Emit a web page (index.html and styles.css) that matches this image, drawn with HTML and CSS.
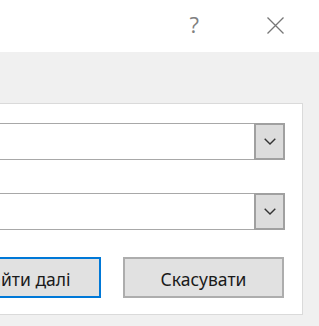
FILE: index.html
```html
<!DOCTYPE html>
<html>
<head>
<meta charset="utf-8">
<link rel="stylesheet" href="styles.css">
</head>
<body>
<div class="dialog">
  <div class="titlebar">
    <span class="help">?</span>
    <span class="close">
      <svg width="17" height="17" viewBox="0 0 17 17"><path d="M0.5 0.5 L16.5 16.5 M16.5 0.5 L0.5 16.5" stroke="#777" stroke-width="1.3" fill="none"/></svg>
    </span>
  </div>
  <div class="body">
    <div class="panel">
      <div class="combo">
        <div class="field"></div>
        <div class="drop"><svg width="12" height="7" viewBox="0 0 12 7"><path d="M0.7 0.7 L6 6 L11.3 0.7" stroke="#333" stroke-width="1.4" fill="none"/></svg></div>
      </div>
      <div class="combo">
        <div class="field"></div>
        <div class="drop"><svg width="12" height="7" viewBox="0 0 12 7"><path d="M0.7 0.7 L6 6 L11.3 0.7" stroke="#333" stroke-width="1.4" fill="none"/></svg></div>
      </div>
      <div class="buttons">
        <button class="btn primary">Знайти далі</button>
        <button class="btn">Скасувати</button>
      </div>
    </div>
  </div>
</div>
</body>
</html>
```
FILE: styles.css
```css
html, body {
  margin: 0;
  padding: 0;
  width: 319px;
  height: 326px;
  overflow: hidden;
  background: #f0f0f0;
  font-family: "Noto Sans", "Open Sans", sans-serif;
}
.dialog {
  width: 319px;
  height: 326px;
  display: flex;
  flex-direction: column;
}
.titlebar {
  height: 52px;
  background: #ffffff;
  display: flex;
  align-items: flex-start;
  justify-content: flex-end;
  flex-shrink: 0;
}
.help {
  margin-top: 11px;
  margin-right: 68px;
  font-family: "Open Sans", sans-serif;
  font-size: 22px;
  line-height: 26px;
  color: #808080;
}
.close {
  margin-top: 17px;
  margin-right: 35px;
  display: flex;
}
.body {
  flex: 1;
  padding: 51px 16px 0 0;
  display: flex;
  justify-content: flex-end;
}
.panel {
  margin-left: -60px;
  flex: 1;
  height: 212px;
  box-sizing: border-box;
  background: #ffffff;
  border: 1px solid #dadada;
  padding: 19px 17px 0 0;
  display: flex;
  flex-direction: column;
}
.combo {
  height: 37px;
  display: flex;
  box-sizing: border-box;
}
.combo + .combo {
  margin-top: 33px;
}
.field {
  flex: 1;
  border: 1px solid #a8a8a8;
  border-right: none;
  background: #fff;
}
.drop {
  width: 31px;
  box-sizing: border-box;
  border: 2px solid #a0a0a0;
  background: #dcdcdc;
  display: flex;
  align-items: center;
  justify-content: center;
}
.buttons {
  margin-top: 27px;
  display: flex;
  justify-content: flex-end;
  gap: 22px;
  padding-right: 1px;
}
.btn {
  width: 161px;
  height: 41px;
  flex-shrink: 0;
  box-sizing: border-box;
  border: 2px solid #adadad;
  background: #e1e1e1;
  font-family: "Noto Sans", "Open Sans", sans-serif;
  font-size: 17.5px;
  color: #1a1a1a;
  padding: 3px 0 0 0;
  margin: 0;
}
.btn.primary {
  border-color: #0078d7;
}
```
